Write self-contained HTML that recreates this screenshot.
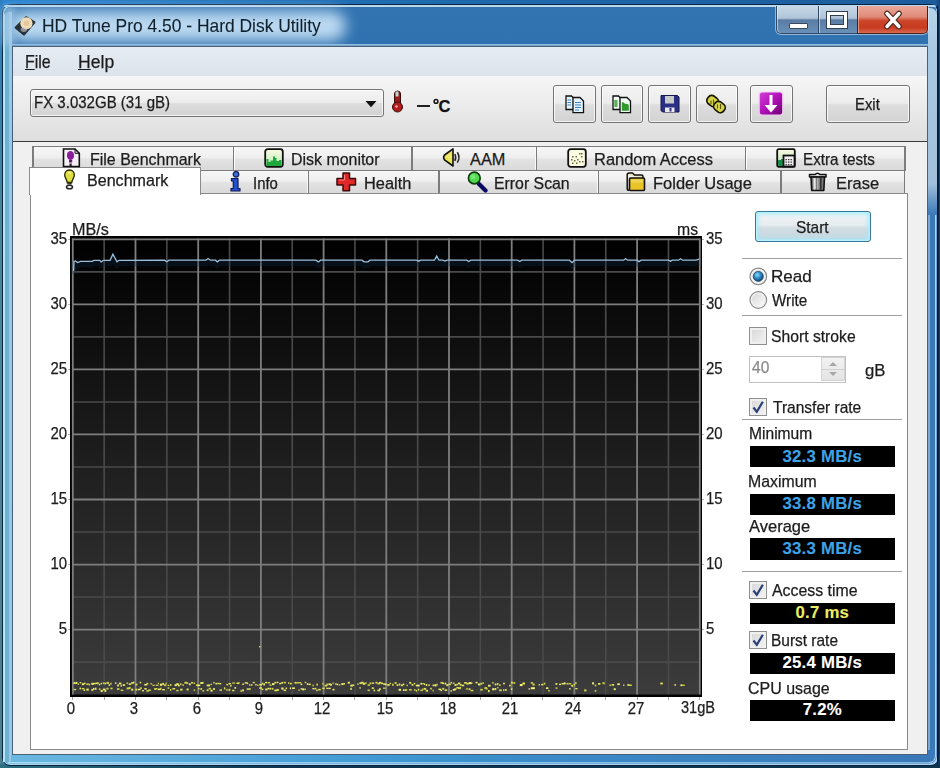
<!DOCTYPE html>
<html><head><meta charset="utf-8"><title>HD Tune Pro</title>
<style>
*{margin:0;padding:0;box-sizing:border-box}
html,body{width:940px;height:768px;overflow:hidden}
body{position:relative;background:linear-gradient(90deg,#2f7fc0 0%,#2a6db0 60%,#1d4f86 100%);font-family:"Liberation Sans",sans-serif;color:#1c1c1c}
.a{position:absolute}
.t{position:absolute;white-space:nowrap;line-height:1;-webkit-text-stroke:0.25px currentColor}
</style></head><body>

<div class="a" style="left:0px;top:0px;width:940px;height:5px;background:linear-gradient(90deg,#2a84d0,#1f6cb0 40%,#1c5c9c 100%)"></div>
<div class="a" style="left:0px;top:0px;width:3px;height:768px;background:linear-gradient(180deg,#2a7ec0 0%,#4a8595 30%,#4a8090 100%)"></div>
<div class="a" style="left:937px;top:0px;width:3px;height:768px;background:linear-gradient(180deg,#1a4a80,#0f3a66)"></div>
<div class="a" style="left:0px;top:764px;width:940px;height:4px;background:linear-gradient(90deg,#2a7080,#0e3550 30%,#0e3550 100%)"></div>
<div class="a" style="left:2px;top:3.5px;width:937px;height:762.5px;border:1.3px solid #0a2440;border-radius:9px 9px 8px 8px;background:linear-gradient(90deg,#72b4d8 0%,#5aa0d0 25%,#3f88c8 50%,#3a7cbc 80%,#3a78b8 100%);box-shadow:inset 1.5px 1.5px 0 #b8e6fa,inset -1.5px -1.5px 0 #a8d4f0"></div>
<div class="a" style="left:4px;top:6px;width:932px;height:39px;border-radius:8px 8px 0 0;background:linear-gradient(180deg,#3a6ea0 0px,#3274b2 3px,#3072b0 100%)"></div>
<div class="a" style="left:4px;top:5px;width:932px;height:1.5px;background:#b8d8f0;border-radius:8px 8px 0 0"></div>
<div class="a" style="left:3.2px;top:12px;width:8.600000000000001px;height:750px;border-radius:6px 0 0 0;background:linear-gradient(90deg,#b0e8f8 0px,#b0e8f8 2px,#70b0d0 2px,#70b0d0 6.3px,#98c8e8 6.3px,#98c8e8 8.6px)"></div>
<div class="a" style="left:8px;top:11px;width:338px;height:30px;border-radius:15px;background:rgba(200,226,246,.92);filter:blur(7px)"></div>
<div class="a" style="left:3px;top:6px;width:12px;height:40px;background:rgba(160,200,230,.7);filter:blur(3px)"></div>
<div class="a" style="left:11.5px;top:44px;width:916.5px;height:2px;background:linear-gradient(180deg,#a0c8e8,#6a9ac0)"></div>
<div class="a" style="left:928px;top:8px;width:8.5px;height:207px;border-radius:0 7px 0 0;background:linear-gradient(180deg,#b8d4ea,#a8c8e4 20%,#a0c0dc 85%,#3a78b8 100%)"></div>
<div class="a" style="left:928px;top:215px;width:8px;height:542px;background:linear-gradient(90deg,#80a8d0 0px,#80a8d0 2px,#3a78b8 2px,#3a78b8 6.8px,#b0d4f0 6.8px,#b0d4f0 8px)"></div>
<div class="a" style="left:926px;top:750px;width:10.299999999999955px;height:13px;border-right:1.3px solid #b0d4f0;border-bottom:1.3px solid #a8d8f8;border-radius:0 0 7px 0;background:#3a7abc"></div>
<div class="a" style="left:936.5px;top:6px;width:1.5px;height:758px;background:#081830"></div>
<div class="a" style="left:11px;top:755px;width:919px;height:7px;background:linear-gradient(90deg,#6ab8e0 0%,#4aa0d8 30%,#3a90cc 50%,#3a82c0 75%,#3a78b8 100%)"></div>
<div class="a" style="left:8px;top:761.5px;width:921px;height:1.5px;background:linear-gradient(90deg,#a8e0f8,#90c8ec 50%,#80b8e0)"></div>
<div class="a" style="left:11.8px;top:45.5px;width:916.0px;height:709.5px;border:1.2px solid #4a6078;background:#f0f0f0"></div>
<div class="a" style="left:13px;top:47px;width:914px;height:29px;background:linear-gradient(180deg,#e6ecf4,#dde3ea)"></div>
<div class="t" style="left:24.90px;top:52.7px;font-size:18.4px;font-weight:400;color:#1c1c1c;transform:scaleX(0.8690);transform-origin:0 50%;"><u>F</u>ile</div>
<div class="t" style="left:78.30px;top:52.7px;font-size:18.4px;font-weight:400;color:#1c1c1c;transform:scaleX(0.9568);transform-origin:0 50%;"><u>H</u>elp</div>
<div class="a" style="left:13px;top:76px;width:914px;height:65px;background:linear-gradient(180deg,#f6f6f6,#dedede)"></div>
<div class="a" style="left:13px;top:141px;width:914px;height:1px;background:#3a3a3a"></div>
<div class="a" style="left:13px;top:142px;width:914px;height:612px;background:#f0f0f0"></div>
<div class="t" style="left:41.82px;top:17.9px;font-size:17.8px;font-weight:400;color:#10202c;transform:scaleX(0.9796);transform-origin:0 50%;-webkit-text-stroke:0.1px currentColor">HD Tune Pro 4.50 - Hard Disk Utility</div>
<div class="a" style="left:775px;top:5.5px;width:154px;height:29.5px;border-radius:0 0 6px 6px;background:rgba(220,240,255,.55)"></div>
<div class="a" style="left:776px;top:6px;width:42px;height:28px;border:1px solid #2e4a66;border-right:none;border-top:none;border-radius:0 0 0 5px;background:linear-gradient(180deg,#c8d8e8 0%,#b0c4d8 45%,#5a7ca4 52%,#6a90b8 100%);box-shadow:inset 1px 0 0 rgba(255,255,255,.5)"></div>
<div class="a" style="left:818px;top:6px;width:39px;height:28px;border:1px solid #2e4a66;border-right:none;border-top:none;background:linear-gradient(180deg,#c8d8e8 0%,#b0c4d8 45%,#5a7ca4 52%,#6a90b8 100%);box-shadow:inset 1px 0 0 rgba(255,255,255,.5)"></div>
<div class="a" style="left:857px;top:6px;width:71px;height:28px;border:1px solid #4a2018;border-top:none;border-radius:0 0 5px 0;background:linear-gradient(180deg,#eaa898 0%,#e08a78 40%,#cc4428 55%,#c83c20 80%,#d86a50 100%);box-shadow:inset 1px 0 0 rgba(255,220,200,.5)"></div>
<div class="a" style="left:788.5px;top:22.5px;width:19.0px;height:6.0px;background:#fff;border:1px solid #3a4a5a;border-radius:1px"></div>
<div class="a" style="left:826.5px;top:11.5px;width:20.0px;height:16.5px;border:3px solid #fff;outline:1px solid #304050;box-shadow:inset 0 0 0 1px #304050"></div>
<svg class="a" style="left:882px;top:9px" width="22" height="22" viewBox="0 0 22 22"><path d="M5 4.5 L17 17.5 M17 4.5 L5 17.5" stroke="#4a2018" stroke-width="5.6" stroke-linecap="round"/><path d="M5 4.5 L17 17.5 M17 4.5 L5 17.5" stroke="#fff" stroke-width="3.4" stroke-linecap="round"/></svg>
<div class="a" style="left:30px;top:89px;width:354px;height:28px;border:1.4px solid #747474;border-radius:3px;background:linear-gradient(180deg,#f4f4f4 0%,#ececec 48%,#dedede 52%,#d2d2d2 100%);box-shadow:inset 0 0 0 1px rgba(255,255,255,.75)"></div>
<div class="t" style="left:34.09px;top:94.6px;font-size:16.6px;font-weight:400;color:#1c1c1c;transform:scaleX(0.9054);transform-origin:0 50%;">FX 3.032GB (31 gB)</div>
<svg class="a" style="left:364px;top:100px" width="14" height="8"><path d="M1.5 1 L12.5 1 L7 7.2 Z" fill="#111"/></svg>
<svg class="a" style="left:391px;top:90px" width="13" height="23" viewBox="0 0 13 23">
<rect x="3.5" y="1" width="6" height="15" rx="3" fill="#9a1a1a" stroke="#3a0808" stroke-width="1"/>
<rect x="4.5" y="1.5" width="3" height="5" fill="#bcd6d4"/>
<circle cx="6.5" cy="17" r="5" fill="#b01c1c" stroke="#3a0808" stroke-width="1"/>
<circle cx="5.5" cy="16.5" r="1.3" fill="#f0a0a0"/>
</svg>
<div class="a" style="left:416.5px;top:105.2px;width:13.0px;height:1.7999999999999972px;background:#202020"></div>
<div class="t" style="left:438.5px;top:97.8px;font-size:16.5px;font-weight:700;color:#111;">C</div>
<svg class="a" style="left:432px;top:98px" width="8" height="7"><circle cx="4" cy="3.4" r="1.9" fill="none" stroke="#151515" stroke-width="1.5"/></svg>
<div class="a" style="left:553px;top:85px;width:43px;height:38px;border:1.4px solid #747474;border-radius:3px;background:linear-gradient(180deg,#f4f4f4 0%,#ececec 48%,#dedede 52%,#d2d2d2 100%);box-shadow:inset 0 0 0 1px rgba(255,255,255,.75)"></div>
<div class="a" style="left:601px;top:85px;width:42px;height:38px;border:1.4px solid #747474;border-radius:3px;background:linear-gradient(180deg,#f4f4f4 0%,#ececec 48%,#dedede 52%,#d2d2d2 100%);box-shadow:inset 0 0 0 1px rgba(255,255,255,.75)"></div>
<div class="a" style="left:648px;top:85px;width:43px;height:38px;border:1.4px solid #747474;border-radius:3px;background:linear-gradient(180deg,#f4f4f4 0%,#ececec 48%,#dedede 52%,#d2d2d2 100%);box-shadow:inset 0 0 0 1px rgba(255,255,255,.75)"></div>
<div class="a" style="left:696px;top:85px;width:42px;height:38px;border:1.4px solid #747474;border-radius:3px;background:linear-gradient(180deg,#f4f4f4 0%,#ececec 48%,#dedede 52%,#d2d2d2 100%);box-shadow:inset 0 0 0 1px rgba(255,255,255,.75)"></div>
<div class="a" style="left:750px;top:85px;width:43px;height:38px;border:1.4px solid #747474;border-radius:3px;background:linear-gradient(180deg,#f4f4f4 0%,#ececec 48%,#dedede 52%,#d2d2d2 100%);box-shadow:inset 0 0 0 1px rgba(255,255,255,.75)"></div>
<div class="a" style="left:826px;top:85px;width:84px;height:38px;border:1.4px solid #747474;border-radius:3px;background:linear-gradient(180deg,#f4f4f4 0%,#ececec 48%,#dedede 52%,#d2d2d2 100%);box-shadow:inset 0 0 0 1px rgba(255,255,255,.75)"></div>
<div class="t" style="left:854.84px;top:95.6px;font-size:17.2px;font-weight:400;color:#1a1a1a;transform:scaleX(0.8643);transform-origin:0 50%;">Exit</div>
<div class="a" style="left:33px;top:146px;width:200.5px;height:25px;background:linear-gradient(180deg,#f7f7f7 0%,#efefef 45%,#e2e2e2 55%,#d9d9d9 100%);box-shadow:inset 1px 1px 0 #fff,inset -1px 0 0 #fafafa"></div>
<div class="a" style="left:233.5px;top:146px;width:178.5px;height:25px;background:linear-gradient(180deg,#f7f7f7 0%,#efefef 45%,#e2e2e2 55%,#d9d9d9 100%);box-shadow:inset 1px 1px 0 #fff,inset -1px 0 0 #fafafa"></div>
<div class="a" style="left:412px;top:146px;width:124.20000000000005px;height:25px;background:linear-gradient(180deg,#f7f7f7 0%,#efefef 45%,#e2e2e2 55%,#d9d9d9 100%);box-shadow:inset 1px 1px 0 #fff,inset -1px 0 0 #fafafa"></div>
<div class="a" style="left:536.2px;top:146px;width:209.5px;height:25px;background:linear-gradient(180deg,#f7f7f7 0%,#efefef 45%,#e2e2e2 55%,#d9d9d9 100%);box-shadow:inset 1px 1px 0 #fff,inset -1px 0 0 #fafafa"></div>
<div class="a" style="left:745.7px;top:146px;width:159.29999999999995px;height:25px;background:linear-gradient(180deg,#f7f7f7 0%,#efefef 45%,#e2e2e2 55%,#d9d9d9 100%);box-shadow:inset 1px 1px 0 #fff,inset -1px 0 0 #fafafa"></div>
<div class="a" style="left:33px;top:145.8px;width:872px;height:1.1999999999999886px;background:#7c7c7c"></div>
<div class="a" style="left:32.4px;top:146px;width:1.3999999999999986px;height:25px;background:#7c7c7c"></div>
<div class="a" style="left:232.9px;top:146px;width:1.4000000000000057px;height:25px;background:#7c7c7c"></div>
<div class="a" style="left:411.4px;top:146px;width:1.400000000000034px;height:25px;background:#7c7c7c"></div>
<div class="a" style="left:535.6px;top:146px;width:1.3999999999999773px;height:25px;background:#7c7c7c"></div>
<div class="a" style="left:745.1px;top:146px;width:1.3999999999999773px;height:25px;background:#7c7c7c"></div>
<div class="a" style="left:904.4px;top:146px;width:1.3999999999999773px;height:25px;background:#7c7c7c"></div>
<div class="a" style="left:200px;top:170px;width:108.30000000000001px;height:24px;background:linear-gradient(180deg,#f7f7f7 0%,#efefef 45%,#e2e2e2 55%,#d9d9d9 100%);box-shadow:inset 1px 1px 0 #fff,inset -1px 0 0 #fafafa"></div>
<div class="a" style="left:308.3px;top:170px;width:130.5px;height:24px;background:linear-gradient(180deg,#f7f7f7 0%,#efefef 45%,#e2e2e2 55%,#d9d9d9 100%);box-shadow:inset 1px 1px 0 #fff,inset -1px 0 0 #fafafa"></div>
<div class="a" style="left:438.8px;top:170px;width:159.59999999999997px;height:24px;background:linear-gradient(180deg,#f7f7f7 0%,#efefef 45%,#e2e2e2 55%,#d9d9d9 100%);box-shadow:inset 1px 1px 0 #fff,inset -1px 0 0 #fafafa"></div>
<div class="a" style="left:598.4px;top:170px;width:182.60000000000002px;height:24px;background:linear-gradient(180deg,#f7f7f7 0%,#efefef 45%,#e2e2e2 55%,#d9d9d9 100%);box-shadow:inset 1px 1px 0 #fff,inset -1px 0 0 #fafafa"></div>
<div class="a" style="left:781px;top:170px;width:123.5px;height:24px;background:linear-gradient(180deg,#f7f7f7 0%,#efefef 45%,#e2e2e2 55%,#d9d9d9 100%);box-shadow:inset 1px 1px 0 #fff,inset -1px 0 0 #fafafa"></div>
<div class="a" style="left:200px;top:169.6px;width:704.5px;height:1.200000000000017px;background:#7c7c7c"></div>
<div class="a" style="left:199.4px;top:170px;width:1.4000000000000057px;height:24px;background:#7c7c7c"></div>
<div class="a" style="left:307.7px;top:170px;width:1.400000000000034px;height:24px;background:#7c7c7c"></div>
<div class="a" style="left:438.2px;top:170px;width:1.400000000000034px;height:24px;background:#7c7c7c"></div>
<div class="a" style="left:597.8px;top:170px;width:1.3999999999999773px;height:24px;background:#7c7c7c"></div>
<div class="a" style="left:780.4px;top:170px;width:1.3999999999999773px;height:24px;background:#7c7c7c"></div>
<div class="a" style="left:903.9px;top:170px;width:1.3999999999999773px;height:24px;background:#7c7c7c"></div>
<div class="a" style="left:30px;top:193.2px;width:878px;height:556.8px;border:1.3px solid #8a8a8a;background:#fff"></div>
<div class="a" style="left:29.4px;top:167.4px;width:171.6px;height:27.599999999999994px;border:1.3px solid #8a8a8a;border-bottom:none;background:#fff"></div>
<div class="t" style="left:89.72px;top:151.2px;font-size:16.3px;font-weight:400;color:#1c1c1c;transform:scaleX(0.9804);transform-origin:0 50%;">File Benchmark</div>
<div class="t" style="left:291.42px;top:151.2px;font-size:16.3px;font-weight:400;color:#1c1c1c;transform:scaleX(0.9787);transform-origin:0 50%;">Disk monitor</div>
<div class="t" style="left:470.10px;top:151.2px;font-size:16.3px;font-weight:400;color:#1c1c1c;transform:scaleX(1.0000);transform-origin:0 50%;">AAM</div>
<div class="t" style="left:594.39px;top:151.2px;font-size:16.3px;font-weight:400;color:#1c1c1c;transform:scaleX(1.0103);transform-origin:0 50%;">Random Access</div>
<div class="t" style="left:803.07px;top:151.2px;font-size:16.3px;font-weight:400;color:#1c1c1c;transform:scaleX(0.9342);transform-origin:0 50%;">Extra tests</div>
<div class="t" style="left:87.21px;top:172.2px;font-size:16.3px;font-weight:400;color:#1c1c1c;transform:scaleX(0.9877);transform-origin:0 50%;">Benchmark</div>
<div class="t" style="left:253.28px;top:174.8px;font-size:16.3px;font-weight:400;color:#1c1c1c;transform:scaleX(0.9154);transform-origin:0 50%;">Info</div>
<div class="t" style="left:363.80px;top:174.8px;font-size:16.3px;font-weight:400;color:#1c1c1c;transform:scaleX(1.0044);transform-origin:0 50%;">Health</div>
<div class="t" style="left:494.03px;top:174.8px;font-size:16.3px;font-weight:400;color:#1c1c1c;transform:scaleX(0.9724);transform-origin:0 50%;">Error Scan</div>
<div class="t" style="left:653.19px;top:174.8px;font-size:16.3px;font-weight:400;color:#1c1c1c;transform:scaleX(1.0115);transform-origin:0 50%;">Folder Usage</div>
<div class="t" style="left:836.09px;top:174.8px;font-size:16.3px;font-weight:400;color:#1c1c1c;transform:scaleX(1.0122);transform-origin:0 50%;">Erase</div>
<svg class="a" style="left:70px;top:236px" width="632" height="461" viewBox="0 0 632 461">
<defs><linearGradient id="cg" x1="0" y1="0" x2="0" y2="1"><stop offset="0" stop-color="#000"/><stop offset="0.22" stop-color="#0e0e0e"/><stop offset="1" stop-color="#3c3c3c"/></linearGradient></defs>
<rect x="0" y="0" width="632" height="461" fill="#000"/>
<rect x="2" y="2.5" width="628" height="456.0" fill="url(#cg)"/>
<line x1="34.15" y1="2.5" x2="34.15" y2="458.5" stroke="#4a4a4a" stroke-width="1.6"/>
<line x1="96.85" y1="2.5" x2="96.85" y2="458.5" stroke="#4a4a4a" stroke-width="1.6"/>
<line x1="159.55" y1="2.5" x2="159.55" y2="458.5" stroke="#4a4a4a" stroke-width="1.6"/>
<line x1="222.25" y1="2.5" x2="222.25" y2="458.5" stroke="#4a4a4a" stroke-width="1.6"/>
<line x1="284.95" y1="2.5" x2="284.95" y2="458.5" stroke="#4a4a4a" stroke-width="1.6"/>
<line x1="347.65" y1="2.5" x2="347.65" y2="458.5" stroke="#4a4a4a" stroke-width="1.6"/>
<line x1="410.35" y1="2.5" x2="410.35" y2="458.5" stroke="#4a4a4a" stroke-width="1.6"/>
<line x1="473.05" y1="2.5" x2="473.05" y2="458.5" stroke="#4a4a4a" stroke-width="1.6"/>
<line x1="535.75" y1="2.5" x2="535.75" y2="458.5" stroke="#4a4a4a" stroke-width="1.6"/>
<line x1="598.45" y1="2.5" x2="598.45" y2="458.5" stroke="#4a4a4a" stroke-width="1.6"/>
<line x1="2" y1="35.83" x2="630" y2="35.83" stroke="#4a4a4a" stroke-width="1.6"/>
<line x1="2" y1="100.88" x2="630" y2="100.88" stroke="#4a4a4a" stroke-width="1.6"/>
<line x1="2" y1="165.93" x2="630" y2="165.93" stroke="#4a4a4a" stroke-width="1.6"/>
<line x1="2" y1="230.97" x2="630" y2="230.97" stroke="#4a4a4a" stroke-width="1.6"/>
<line x1="2" y1="296.02" x2="630" y2="296.02" stroke="#4a4a4a" stroke-width="1.6"/>
<line x1="2" y1="361.07" x2="630" y2="361.07" stroke="#4a4a4a" stroke-width="1.6"/>
<line x1="2" y1="426.12" x2="630" y2="426.12" stroke="#4a4a4a" stroke-width="1.6"/>
<line x1="2.80" y1="2.5" x2="2.80" y2="458.5" stroke="#7e7e7e" stroke-width="1.8"/>
<line x1="65.50" y1="2.5" x2="65.50" y2="458.5" stroke="#7e7e7e" stroke-width="1.8"/>
<line x1="128.20" y1="2.5" x2="128.20" y2="458.5" stroke="#7e7e7e" stroke-width="1.8"/>
<line x1="190.90" y1="2.5" x2="190.90" y2="458.5" stroke="#7e7e7e" stroke-width="1.8"/>
<line x1="253.60" y1="2.5" x2="253.60" y2="458.5" stroke="#7e7e7e" stroke-width="1.8"/>
<line x1="316.30" y1="2.5" x2="316.30" y2="458.5" stroke="#7e7e7e" stroke-width="1.8"/>
<line x1="379.00" y1="2.5" x2="379.00" y2="458.5" stroke="#7e7e7e" stroke-width="1.8"/>
<line x1="441.70" y1="2.5" x2="441.70" y2="458.5" stroke="#7e7e7e" stroke-width="1.8"/>
<line x1="504.40" y1="2.5" x2="504.40" y2="458.5" stroke="#7e7e7e" stroke-width="1.8"/>
<line x1="567.10" y1="2.5" x2="567.10" y2="458.5" stroke="#7e7e7e" stroke-width="1.8"/>
<line x1="629.80" y1="2.5" x2="629.80" y2="458.5" stroke="#7e7e7e" stroke-width="1.8"/>
<line x1="2" y1="3.30" x2="630" y2="3.30" stroke="#7e7e7e" stroke-width="1.8"/>
<line x1="2" y1="68.35" x2="630" y2="68.35" stroke="#7e7e7e" stroke-width="1.8"/>
<line x1="2" y1="133.40" x2="630" y2="133.40" stroke="#7e7e7e" stroke-width="1.8"/>
<line x1="2" y1="198.45" x2="630" y2="198.45" stroke="#7e7e7e" stroke-width="1.8"/>
<line x1="2" y1="263.50" x2="630" y2="263.50" stroke="#7e7e7e" stroke-width="1.8"/>
<line x1="2" y1="328.55" x2="630" y2="328.55" stroke="#7e7e7e" stroke-width="1.8"/>
<line x1="2" y1="393.60" x2="630" y2="393.60" stroke="#7e7e7e" stroke-width="1.8"/>
<rect x="3.5" y="446.1" width="2.2" height="2.0" fill="#e8e860"/>
<rect x="3.5" y="452.9" width="2.7" height="1.3" fill="#dcdc50"/>
<rect x="5.5" y="445.9" width="1.9" height="2.1" fill="#e8e860"/>
<rect x="7.7" y="447.5" width="1.3" height="1.3" fill="#dcdc50"/>
<rect x="9.6" y="446.0" width="1.7" height="1.4" fill="#dcdc50"/>
<rect x="9.6" y="451.6" width="1.4" height="1.8" fill="#e8e860"/>
<rect x="11.8" y="447.3" width="2.4" height="1.8" fill="#f0f078"/>
<rect x="11.8" y="452.0" width="2.5" height="1.4" fill="#dcdc50"/>
<rect x="13.7" y="446.7" width="1.9" height="1.4" fill="#e8e860"/>
<rect x="13.7" y="453.4" width="1.4" height="1.6" fill="#f0f078"/>
<rect x="16.3" y="447.4" width="2.5" height="1.6" fill="#d0d048"/>
<rect x="16.3" y="452.6" width="2.5" height="2.0" fill="#e8e860"/>
<rect x="18.8" y="447.7" width="1.3" height="1.8" fill="#d0d048"/>
<rect x="21.3" y="446.8" width="2.3" height="2.1" fill="#e8e860"/>
<rect x="21.3" y="453.0" width="2.0" height="1.9" fill="#dcdc50"/>
<rect x="23.0" y="446.9" width="2.6" height="1.4" fill="#e8e860"/>
<rect x="23.0" y="451.9" width="1.4" height="2.0" fill="#f0f078"/>
<rect x="24.9" y="446.7" width="2.6" height="1.4" fill="#dcdc50"/>
<rect x="24.9" y="451.7" width="1.6" height="2.0" fill="#f0f078"/>
<rect x="26.6" y="446.1" width="2.1" height="2.1" fill="#d0d048"/>
<rect x="28.8" y="447.8" width="1.3" height="1.6" fill="#f0f078"/>
<rect x="28.8" y="452.5" width="1.8" height="1.4" fill="#dcdc50"/>
<rect x="30.6" y="446.7" width="1.3" height="1.8" fill="#e8e860"/>
<rect x="30.6" y="454.0" width="2.2" height="2.0" fill="#e8e860"/>
<rect x="32.8" y="446.4" width="1.8" height="1.7" fill="#d0d048"/>
<rect x="32.8" y="452.6" width="2.8" height="1.7" fill="#f0f078"/>
<rect x="34.5" y="446.7" width="1.6" height="1.7" fill="#dcdc50"/>
<rect x="34.5" y="454.0" width="1.8" height="1.9" fill="#e8e860"/>
<rect x="36.4" y="445.9" width="2.6" height="2.0" fill="#d0d048"/>
<rect x="36.4" y="451.7" width="2.1" height="1.8" fill="#d0d048"/>
<rect x="38.6" y="448.0" width="1.5" height="2.0" fill="#dcdc50"/>
<rect x="40.4" y="446.7" width="1.2" height="1.9" fill="#e8e860"/>
<rect x="40.4" y="451.6" width="2.2" height="1.7" fill="#d0d048"/>
<rect x="44.9" y="446.3" width="1.5" height="1.7" fill="#dcdc50"/>
<rect x="47.1" y="448.5" width="1.8" height="2.0" fill="#e8e860"/>
<rect x="47.1" y="452.2" width="2.3" height="1.7" fill="#dcdc50"/>
<rect x="48.9" y="446.7" width="2.5" height="1.7" fill="#f0f078"/>
<rect x="50.6" y="448.8" width="1.2" height="1.9" fill="#f0f078"/>
<rect x="50.6" y="453.6" width="2.8" height="1.4" fill="#d0d048"/>
<rect x="52.7" y="448.2" width="2.4" height="1.7" fill="#e8e860"/>
<rect x="56.6" y="446.5" width="1.6" height="1.5" fill="#d0d048"/>
<rect x="56.6" y="451.4" width="2.7" height="2.0" fill="#d0d048"/>
<rect x="58.8" y="447.3" width="2.5" height="1.7" fill="#dcdc50"/>
<rect x="58.8" y="451.1" width="1.9" height="1.8" fill="#dcdc50"/>
<rect x="61.2" y="446.1" width="2.2" height="1.7" fill="#e8e860"/>
<rect x="61.2" y="452.7" width="2.1" height="2.0" fill="#e8e860"/>
<rect x="62.9" y="445.7" width="1.4" height="1.7" fill="#f0f078"/>
<rect x="65.4" y="447.6" width="2.0" height="1.9" fill="#dcdc50"/>
<rect x="65.4" y="452.7" width="2.0" height="1.9" fill="#dcdc50"/>
<rect x="67.9" y="452.8" width="2.7" height="1.4" fill="#f0f078"/>
<rect x="69.6" y="445.8" width="1.6" height="1.5" fill="#e8e860"/>
<rect x="69.6" y="451.4" width="2.4" height="1.4" fill="#d0d048"/>
<rect x="72.1" y="454.0" width="1.8" height="1.4" fill="#f0f078"/>
<rect x="74.3" y="447.9" width="2.8" height="1.6" fill="#f0f078"/>
<rect x="74.3" y="452.0" width="2.4" height="1.6" fill="#e8e860"/>
<rect x="76.4" y="446.8" width="2.0" height="1.7" fill="#d0d048"/>
<rect x="76.4" y="454.2" width="2.5" height="1.4" fill="#e8e860"/>
<rect x="78.3" y="453.4" width="2.5" height="1.6" fill="#d0d048"/>
<rect x="80.4" y="447.2" width="1.7" height="1.3" fill="#d0d048"/>
<rect x="82.4" y="448.6" width="2.2" height="1.4" fill="#d0d048"/>
<rect x="84.1" y="452.1" width="2.1" height="1.8" fill="#d0d048"/>
<rect x="85.7" y="448.6" width="2.8" height="1.3" fill="#d0d048"/>
<rect x="85.7" y="452.0" width="1.7" height="1.5" fill="#dcdc50"/>
<rect x="87.8" y="446.7" width="1.2" height="1.3" fill="#d0d048"/>
<rect x="87.8" y="452.6" width="2.8" height="1.5" fill="#f0f078"/>
<rect x="89.9" y="447.7" width="2.3" height="2.1" fill="#f0f078"/>
<rect x="89.9" y="451.7" width="1.6" height="2.0" fill="#dcdc50"/>
<rect x="92.2" y="446.9" width="1.8" height="2.0" fill="#e8e860"/>
<rect x="92.2" y="453.0" width="2.6" height="1.4" fill="#f0f078"/>
<rect x="93.9" y="448.4" width="2.3" height="1.8" fill="#d0d048"/>
<rect x="95.5" y="446.5" width="1.2" height="2.1" fill="#d0d048"/>
<rect x="97.7" y="448.7" width="1.7" height="1.4" fill="#d0d048"/>
<rect x="97.7" y="451.3" width="1.6" height="1.5" fill="#dcdc50"/>
<rect x="100.0" y="448.2" width="1.4" height="1.6" fill="#e8e860"/>
<rect x="100.0" y="453.0" width="1.3" height="1.8" fill="#dcdc50"/>
<rect x="102.4" y="452.0" width="2.8" height="1.5" fill="#dcdc50"/>
<rect x="104.6" y="448.2" width="2.3" height="1.9" fill="#f0f078"/>
<rect x="106.3" y="447.2" width="2.5" height="2.0" fill="#e8e860"/>
<rect x="106.3" y="453.9" width="2.3" height="1.4" fill="#dcdc50"/>
<rect x="108.0" y="448.7" width="1.8" height="1.7" fill="#f0f078"/>
<rect x="110.2" y="447.2" width="1.2" height="1.9" fill="#e8e860"/>
<rect x="110.2" y="452.7" width="2.3" height="1.9" fill="#e8e860"/>
<rect x="112.3" y="448.3" width="1.6" height="1.5" fill="#dcdc50"/>
<rect x="114.3" y="445.8" width="2.7" height="1.9" fill="#d0d048"/>
<rect x="116.6" y="446.1" width="1.6" height="1.8" fill="#d0d048"/>
<rect x="116.6" y="452.5" width="2.0" height="1.9" fill="#e8e860"/>
<rect x="118.8" y="447.3" width="1.9" height="1.9" fill="#f0f078"/>
<rect x="121.0" y="445.9" width="2.0" height="1.7" fill="#d0d048"/>
<rect x="123.6" y="446.5" width="1.5" height="1.4" fill="#dcdc50"/>
<rect x="123.6" y="453.4" width="1.6" height="1.4" fill="#d0d048"/>
<rect x="126.0" y="448.4" width="2.3" height="1.7" fill="#dcdc50"/>
<rect x="128.0" y="448.6" width="2.3" height="1.5" fill="#f0f078"/>
<rect x="128.0" y="452.1" width="1.7" height="1.3" fill="#d0d048"/>
<rect x="130.3" y="446.0" width="2.7" height="2.0" fill="#e8e860"/>
<rect x="130.3" y="452.2" width="1.8" height="1.6" fill="#e8e860"/>
<rect x="132.3" y="445.8" width="1.4" height="1.8" fill="#d0d048"/>
<rect x="132.3" y="454.1" width="1.9" height="1.5" fill="#d0d048"/>
<rect x="136.7" y="448.5" width="2.7" height="1.9" fill="#dcdc50"/>
<rect x="136.7" y="453.3" width="1.9" height="1.8" fill="#dcdc50"/>
<rect x="138.6" y="448.6" width="1.4" height="1.6" fill="#f0f078"/>
<rect x="138.6" y="451.8" width="2.4" height="1.6" fill="#d0d048"/>
<rect x="140.5" y="447.7" width="1.4" height="1.4" fill="#dcdc50"/>
<rect x="140.5" y="453.6" width="2.1" height="2.0" fill="#f0f078"/>
<rect x="143.1" y="446.0" width="1.5" height="1.4" fill="#e8e860"/>
<rect x="143.1" y="452.0" width="1.8" height="2.0" fill="#dcdc50"/>
<rect x="145.4" y="446.9" width="2.0" height="1.5" fill="#f0f078"/>
<rect x="147.5" y="446.8" width="2.3" height="1.4" fill="#dcdc50"/>
<rect x="149.5" y="447.0" width="1.7" height="1.4" fill="#e8e860"/>
<rect x="149.5" y="453.4" width="2.5" height="1.3" fill="#f0f078"/>
<rect x="153.9" y="451.3" width="1.4" height="2.1" fill="#e8e860"/>
<rect x="156.3" y="448.0" width="1.9" height="1.3" fill="#e8e860"/>
<rect x="156.3" y="452.8" width="1.3" height="2.1" fill="#d0d048"/>
<rect x="158.5" y="447.0" width="2.4" height="1.4" fill="#e8e860"/>
<rect x="158.5" y="452.9" width="1.8" height="1.9" fill="#dcdc50"/>
<rect x="160.1" y="448.8" width="1.6" height="1.8" fill="#d0d048"/>
<rect x="162.2" y="446.4" width="2.7" height="1.3" fill="#d0d048"/>
<rect x="162.2" y="453.8" width="2.2" height="1.5" fill="#e8e860"/>
<rect x="164.4" y="451.1" width="1.7" height="1.6" fill="#f0f078"/>
<rect x="166.4" y="446.5" width="2.6" height="1.5" fill="#e8e860"/>
<rect x="168.3" y="446.3" width="1.6" height="1.4" fill="#d0d048"/>
<rect x="170.5" y="453.9" width="1.3" height="2.0" fill="#dcdc50"/>
<rect x="172.2" y="447.5" width="1.9" height="1.4" fill="#e8e860"/>
<rect x="172.2" y="453.3" width="1.7" height="2.1" fill="#e8e860"/>
<rect x="174.7" y="446.2" width="2.7" height="1.3" fill="#f0f078"/>
<rect x="176.7" y="446.7" width="1.5" height="1.4" fill="#e8e860"/>
<rect x="176.7" y="452.3" width="2.6" height="1.6" fill="#dcdc50"/>
<rect x="179.1" y="448.2" width="1.3" height="1.5" fill="#f0f078"/>
<rect x="179.1" y="452.4" width="1.7" height="1.3" fill="#f0f078"/>
<rect x="181.1" y="448.1" width="1.3" height="1.7" fill="#e8e860"/>
<rect x="182.7" y="445.8" width="2.2" height="1.5" fill="#d0d048"/>
<rect x="185.0" y="447.9" width="1.7" height="1.5" fill="#d0d048"/>
<rect x="187.2" y="448.6" width="1.3" height="1.4" fill="#dcdc50"/>
<rect x="189.2" y="448.1" width="2.7" height="1.4" fill="#f0f078"/>
<rect x="189.2" y="451.0" width="2.7" height="2.0" fill="#d0d048"/>
<rect x="191.6" y="446.6" width="1.7" height="1.9" fill="#d0d048"/>
<rect x="191.6" y="452.6" width="1.8" height="1.5" fill="#dcdc50"/>
<rect x="193.3" y="447.4" width="1.7" height="2.0" fill="#f0f078"/>
<rect x="195.1" y="445.9" width="2.0" height="1.4" fill="#f0f078"/>
<rect x="195.1" y="452.5" width="2.6" height="1.9" fill="#dcdc50"/>
<rect x="197.6" y="446.0" width="2.5" height="1.5" fill="#d0d048"/>
<rect x="197.6" y="451.8" width="1.6" height="1.5" fill="#f0f078"/>
<rect x="199.4" y="448.4" width="2.1" height="1.4" fill="#d0d048"/>
<rect x="199.4" y="451.8" width="2.0" height="1.8" fill="#e8e860"/>
<rect x="202.0" y="447.1" width="2.5" height="2.0" fill="#f0f078"/>
<rect x="202.0" y="451.9" width="1.4" height="1.8" fill="#dcdc50"/>
<rect x="204.4" y="445.8" width="2.0" height="1.7" fill="#dcdc50"/>
<rect x="204.4" y="453.5" width="2.7" height="1.8" fill="#e8e860"/>
<rect x="206.7" y="445.7" width="1.7" height="1.5" fill="#e8e860"/>
<rect x="206.7" y="452.9" width="2.2" height="2.0" fill="#dcdc50"/>
<rect x="209.2" y="446.8" width="2.2" height="1.5" fill="#e8e860"/>
<rect x="211.3" y="445.9" width="1.8" height="1.8" fill="#dcdc50"/>
<rect x="211.3" y="451.5" width="2.3" height="2.1" fill="#f0f078"/>
<rect x="213.6" y="445.8" width="2.4" height="1.6" fill="#d0d048"/>
<rect x="213.6" y="453.5" width="2.5" height="1.6" fill="#dcdc50"/>
<rect x="215.6" y="451.5" width="1.4" height="1.6" fill="#e8e860"/>
<rect x="218.1" y="446.1" width="1.2" height="1.8" fill="#dcdc50"/>
<rect x="219.8" y="446.8" width="2.0" height="1.6" fill="#dcdc50"/>
<rect x="219.8" y="451.5" width="1.3" height="1.7" fill="#f0f078"/>
<rect x="222.2" y="451.4" width="2.7" height="1.6" fill="#f0f078"/>
<rect x="224.4" y="445.9" width="2.3" height="1.8" fill="#dcdc50"/>
<rect x="226.6" y="446.2" width="2.0" height="1.3" fill="#dcdc50"/>
<rect x="228.4" y="446.1" width="2.8" height="1.3" fill="#dcdc50"/>
<rect x="228.4" y="453.4" width="1.3" height="1.4" fill="#d0d048"/>
<rect x="230.6" y="447.6" width="1.7" height="1.5" fill="#f0f078"/>
<rect x="230.6" y="452.2" width="1.8" height="1.4" fill="#f0f078"/>
<rect x="232.2" y="452.4" width="2.2" height="2.0" fill="#f0f078"/>
<rect x="234.6" y="445.8" width="1.8" height="1.4" fill="#d0d048"/>
<rect x="234.6" y="452.6" width="1.3" height="1.4" fill="#dcdc50"/>
<rect x="236.9" y="447.2" width="1.3" height="1.8" fill="#f0f078"/>
<rect x="238.5" y="447.6" width="2.3" height="1.5" fill="#e8e860"/>
<rect x="242.4" y="448.6" width="1.3" height="1.8" fill="#d0d048"/>
<rect x="242.4" y="452.0" width="2.2" height="1.4" fill="#f0f078"/>
<rect x="244.5" y="451.8" width="2.0" height="1.6" fill="#d0d048"/>
<rect x="246.3" y="447.6" width="1.6" height="2.0" fill="#d0d048"/>
<rect x="246.3" y="453.5" width="1.4" height="1.8" fill="#e8e860"/>
<rect x="248.2" y="452.9" width="2.6" height="1.5" fill="#e8e860"/>
<rect x="252.3" y="446.8" width="1.4" height="1.9" fill="#d0d048"/>
<rect x="252.3" y="451.6" width="2.4" height="1.5" fill="#e8e860"/>
<rect x="254.5" y="448.7" width="2.6" height="1.9" fill="#d0d048"/>
<rect x="256.3" y="447.6" width="1.9" height="2.0" fill="#d0d048"/>
<rect x="256.3" y="451.7" width="2.2" height="1.3" fill="#e8e860"/>
<rect x="258.5" y="447.3" width="2.1" height="1.8" fill="#f0f078"/>
<rect x="258.5" y="451.7" width="2.2" height="1.4" fill="#f0f078"/>
<rect x="260.1" y="447.9" width="1.9" height="1.8" fill="#e8e860"/>
<rect x="262.5" y="446.4" width="1.2" height="1.8" fill="#d0d048"/>
<rect x="262.5" y="452.9" width="2.0" height="1.5" fill="#f0f078"/>
<rect x="265.0" y="447.3" width="1.8" height="1.4" fill="#dcdc50"/>
<rect x="266.7" y="447.7" width="1.5" height="1.5" fill="#f0f078"/>
<rect x="268.8" y="448.2" width="1.5" height="1.4" fill="#d0d048"/>
<rect x="271.4" y="447.1" width="2.1" height="2.0" fill="#f0f078"/>
<rect x="273.4" y="447.0" width="1.6" height="1.5" fill="#e8e860"/>
<rect x="277.7" y="445.8" width="2.2" height="1.8" fill="#f0f078"/>
<rect x="280.3" y="448.6" width="2.6" height="2.0" fill="#e8e860"/>
<rect x="280.3" y="451.8" width="1.6" height="2.1" fill="#dcdc50"/>
<rect x="282.6" y="448.4" width="1.7" height="1.6" fill="#dcdc50"/>
<rect x="287.3" y="447.3" width="1.2" height="1.6" fill="#e8e860"/>
<rect x="289.4" y="446.3" width="2.2" height="1.8" fill="#e8e860"/>
<rect x="289.4" y="451.1" width="1.4" height="1.6" fill="#dcdc50"/>
<rect x="291.2" y="445.7" width="2.3" height="1.9" fill="#e8e860"/>
<rect x="292.8" y="446.8" width="2.5" height="2.0" fill="#e8e860"/>
<rect x="295.2" y="446.4" width="1.5" height="1.3" fill="#e8e860"/>
<rect x="297.6" y="448.2" width="2.2" height="1.7" fill="#d0d048"/>
<rect x="297.6" y="453.5" width="2.2" height="1.6" fill="#d0d048"/>
<rect x="299.6" y="446.4" width="1.7" height="2.0" fill="#d0d048"/>
<rect x="301.8" y="446.5" width="2.4" height="1.3" fill="#f0f078"/>
<rect x="301.8" y="451.3" width="2.0" height="1.7" fill="#e8e860"/>
<rect x="303.6" y="453.6" width="1.5" height="1.7" fill="#e8e860"/>
<rect x="305.5" y="445.8" width="1.8" height="1.7" fill="#e8e860"/>
<rect x="307.3" y="446.7" width="2.5" height="1.8" fill="#d0d048"/>
<rect x="307.3" y="453.6" width="2.7" height="1.7" fill="#dcdc50"/>
<rect x="309.0" y="445.9" width="2.5" height="1.8" fill="#e8e860"/>
<rect x="309.0" y="452.3" width="1.8" height="1.6" fill="#e8e860"/>
<rect x="311.2" y="446.6" width="1.9" height="1.6" fill="#dcdc50"/>
<rect x="313.1" y="447.3" width="2.4" height="1.6" fill="#e8e860"/>
<rect x="313.1" y="451.5" width="2.5" height="1.4" fill="#d0d048"/>
<rect x="315.1" y="447.5" width="1.4" height="1.8" fill="#f0f078"/>
<rect x="317.2" y="448.0" width="2.5" height="1.9" fill="#dcdc50"/>
<rect x="319.5" y="446.7" width="1.6" height="1.5" fill="#dcdc50"/>
<rect x="322.1" y="447.7" width="1.5" height="2.1" fill="#dcdc50"/>
<rect x="324.5" y="446.2" width="2.2" height="1.5" fill="#e8e860"/>
<rect x="326.5" y="448.3" width="1.9" height="1.7" fill="#dcdc50"/>
<rect x="328.6" y="447.5" width="1.8" height="2.0" fill="#dcdc50"/>
<rect x="328.6" y="452.8" width="2.4" height="2.0" fill="#f0f078"/>
<rect x="330.9" y="448.4" width="2.2" height="1.8" fill="#dcdc50"/>
<rect x="332.9" y="447.6" width="1.4" height="1.5" fill="#f0f078"/>
<rect x="332.9" y="453.3" width="1.5" height="1.7" fill="#f0f078"/>
<rect x="334.5" y="453.1" width="2.6" height="1.9" fill="#d0d048"/>
<rect x="336.5" y="448.7" width="1.3" height="1.4" fill="#dcdc50"/>
<rect x="339.1" y="445.9" width="2.1" height="1.9" fill="#dcdc50"/>
<rect x="339.1" y="453.0" width="2.5" height="1.6" fill="#d0d048"/>
<rect x="341.6" y="447.8" width="1.8" height="1.9" fill="#e8e860"/>
<rect x="343.9" y="446.8" width="1.3" height="1.6" fill="#e8e860"/>
<rect x="343.9" y="453.2" width="1.8" height="1.4" fill="#d0d048"/>
<rect x="345.8" y="448.7" width="2.8" height="1.7" fill="#f0f078"/>
<rect x="345.8" y="454.0" width="1.3" height="1.7" fill="#dcdc50"/>
<rect x="347.9" y="448.7" width="1.8" height="1.7" fill="#f0f078"/>
<rect x="347.9" y="452.8" width="1.4" height="1.6" fill="#f0f078"/>
<rect x="350.4" y="446.8" width="1.6" height="1.8" fill="#f0f078"/>
<rect x="350.4" y="453.6" width="2.5" height="1.5" fill="#d0d048"/>
<rect x="352.3" y="447.0" width="2.2" height="1.4" fill="#d0d048"/>
<rect x="352.3" y="452.2" width="1.3" height="1.9" fill="#d0d048"/>
<rect x="354.0" y="447.6" width="1.2" height="1.5" fill="#e8e860"/>
<rect x="354.0" y="451.9" width="2.2" height="2.0" fill="#dcdc50"/>
<rect x="355.8" y="448.1" width="1.5" height="1.9" fill="#f0f078"/>
<rect x="355.8" y="453.9" width="2.2" height="1.8" fill="#e8e860"/>
<rect x="358.3" y="448.3" width="1.5" height="1.7" fill="#dcdc50"/>
<rect x="360.3" y="451.8" width="1.6" height="1.7" fill="#dcdc50"/>
<rect x="362.5" y="448.5" width="2.3" height="1.7" fill="#dcdc50"/>
<rect x="362.5" y="453.8" width="1.2" height="1.7" fill="#d0d048"/>
<rect x="364.7" y="448.3" width="1.8" height="2.1" fill="#f0f078"/>
<rect x="366.4" y="447.7" width="1.2" height="1.8" fill="#e8e860"/>
<rect x="368.4" y="452.6" width="2.6" height="1.5" fill="#e8e860"/>
<rect x="370.4" y="445.9" width="2.3" height="1.7" fill="#d0d048"/>
<rect x="370.4" y="453.5" width="1.5" height="1.6" fill="#f0f078"/>
<rect x="372.2" y="446.5" width="1.8" height="1.6" fill="#f0f078"/>
<rect x="372.2" y="451.9" width="2.0" height="1.8" fill="#dcdc50"/>
<rect x="374.6" y="446.6" width="1.7" height="1.9" fill="#e8e860"/>
<rect x="374.6" y="453.3" width="2.6" height="1.6" fill="#e8e860"/>
<rect x="376.3" y="448.2" width="2.0" height="1.9" fill="#e8e860"/>
<rect x="378.5" y="447.6" width="2.3" height="1.5" fill="#e8e860"/>
<rect x="380.6" y="445.9" width="1.5" height="1.6" fill="#e8e860"/>
<rect x="380.6" y="454.0" width="1.2" height="1.9" fill="#dcdc50"/>
<rect x="382.8" y="446.6" width="1.9" height="1.3" fill="#d0d048"/>
<rect x="382.8" y="452.9" width="2.7" height="1.8" fill="#f0f078"/>
<rect x="384.4" y="448.2" width="2.1" height="1.7" fill="#f0f078"/>
<rect x="384.4" y="452.2" width="2.1" height="1.7" fill="#dcdc50"/>
<rect x="386.4" y="447.7" width="1.5" height="1.8" fill="#dcdc50"/>
<rect x="386.4" y="451.0" width="2.3" height="1.5" fill="#e8e860"/>
<rect x="388.1" y="446.5" width="2.1" height="1.9" fill="#f0f078"/>
<rect x="388.1" y="451.2" width="2.4" height="1.9" fill="#dcdc50"/>
<rect x="389.8" y="447.9" width="1.9" height="2.0" fill="#d0d048"/>
<rect x="389.8" y="451.1" width="1.3" height="1.6" fill="#e8e860"/>
<rect x="391.7" y="448.7" width="2.5" height="1.6" fill="#e8e860"/>
<rect x="394.1" y="446.1" width="2.7" height="1.6" fill="#e8e860"/>
<rect x="396.3" y="446.8" width="2.5" height="1.9" fill="#d0d048"/>
<rect x="396.3" y="451.9" width="1.3" height="2.0" fill="#d0d048"/>
<rect x="398.6" y="446.1" width="2.5" height="2.1" fill="#f0f078"/>
<rect x="398.6" y="452.2" width="1.8" height="1.9" fill="#dcdc50"/>
<rect x="400.5" y="446.4" width="1.9" height="1.5" fill="#e8e860"/>
<rect x="400.5" y="453.8" width="2.8" height="1.5" fill="#dcdc50"/>
<rect x="405.5" y="445.9" width="2.1" height="1.5" fill="#f0f078"/>
<rect x="408.0" y="447.5" width="2.3" height="1.9" fill="#f0f078"/>
<rect x="410.2" y="446.8" width="2.1" height="1.9" fill="#d0d048"/>
<rect x="410.2" y="452.9" width="2.6" height="1.7" fill="#d0d048"/>
<rect x="412.4" y="446.2" width="1.5" height="1.6" fill="#d0d048"/>
<rect x="414.4" y="451.1" width="2.8" height="2.0" fill="#d0d048"/>
<rect x="416.3" y="452.0" width="1.2" height="1.7" fill="#d0d048"/>
<rect x="418.0" y="448.8" width="2.6" height="1.8" fill="#f0f078"/>
<rect x="418.0" y="454.0" width="1.6" height="2.1" fill="#e8e860"/>
<rect x="422.2" y="446.2" width="1.5" height="1.3" fill="#e8e860"/>
<rect x="422.2" y="452.2" width="2.3" height="2.1" fill="#f0f078"/>
<rect x="424.7" y="447.5" width="1.8" height="1.9" fill="#e8e860"/>
<rect x="424.7" y="452.0" width="1.6" height="2.1" fill="#e8e860"/>
<rect x="427.0" y="447.0" width="1.5" height="2.1" fill="#dcdc50"/>
<rect x="427.0" y="451.1" width="1.6" height="1.3" fill="#d0d048"/>
<rect x="429.1" y="448.5" width="1.6" height="1.3" fill="#f0f078"/>
<rect x="429.1" y="453.4" width="2.7" height="1.8" fill="#d0d048"/>
<rect x="433.1" y="446.8" width="1.8" height="1.5" fill="#f0f078"/>
<rect x="433.1" y="453.2" width="1.2" height="1.9" fill="#dcdc50"/>
<rect x="434.9" y="453.0" width="1.8" height="1.9" fill="#dcdc50"/>
<rect x="439.1" y="448.7" width="1.7" height="1.7" fill="#dcdc50"/>
<rect x="440.8" y="445.8" width="2.3" height="1.7" fill="#dcdc50"/>
<rect x="440.8" y="452.3" width="1.6" height="1.5" fill="#e8e860"/>
<rect x="443.3" y="446.1" width="2.0" height="1.7" fill="#d0d048"/>
<rect x="449.8" y="448.0" width="2.8" height="2.1" fill="#f0f078"/>
<rect x="452.4" y="446.5" width="2.6" height="2.0" fill="#e8e860"/>
<rect x="458.6" y="452.2" width="1.3" height="1.5" fill="#f0f078"/>
<rect x="460.8" y="446.2" width="2.4" height="1.5" fill="#dcdc50"/>
<rect x="460.8" y="451.3" width="2.2" height="1.9" fill="#f0f078"/>
<rect x="462.5" y="447.7" width="2.2" height="1.8" fill="#dcdc50"/>
<rect x="462.5" y="451.2" width="2.4" height="2.0" fill="#f0f078"/>
<rect x="468.6" y="448.0" width="1.4" height="1.5" fill="#d0d048"/>
<rect x="471.2" y="447.8" width="2.1" height="1.6" fill="#e8e860"/>
<rect x="473.8" y="446.7" width="1.6" height="1.9" fill="#d0d048"/>
<rect x="476.0" y="451.3" width="2.4" height="1.7" fill="#f0f078"/>
<rect x="478.1" y="454.1" width="1.6" height="1.4" fill="#dcdc50"/>
<rect x="485.5" y="447.0" width="1.8" height="1.9" fill="#e8e860"/>
<rect x="485.5" y="451.4" width="2.0" height="1.4" fill="#d0d048"/>
<rect x="489.1" y="447.7" width="1.9" height="1.4" fill="#f0f078"/>
<rect x="491.6" y="446.9" width="2.5" height="1.6" fill="#e8e860"/>
<rect x="494.0" y="446.4" width="1.7" height="2.0" fill="#f0f078"/>
<rect x="496.6" y="446.9" width="2.1" height="1.7" fill="#d0d048"/>
<rect x="499.1" y="447.0" width="2.2" height="1.4" fill="#d0d048"/>
<rect x="499.1" y="452.0" width="1.5" height="1.5" fill="#e8e860"/>
<rect x="501.2" y="448.8" width="1.9" height="1.9" fill="#e8e860"/>
<rect x="503.6" y="447.7" width="1.6" height="1.8" fill="#d0d048"/>
<rect x="505.3" y="446.0" width="1.2" height="2.1" fill="#dcdc50"/>
<rect x="505.3" y="452.0" width="2.2" height="1.3" fill="#e8e860"/>
<rect x="514.1" y="453.4" width="2.4" height="2.0" fill="#d0d048"/>
<rect x="522.1" y="446.3" width="2.0" height="2.1" fill="#f0f078"/>
<rect x="524.7" y="448.6" width="1.7" height="1.7" fill="#d0d048"/>
<rect x="524.7" y="454.2" width="1.7" height="1.4" fill="#e8e860"/>
<rect x="528.0" y="447.0" width="2.4" height="1.7" fill="#e8e860"/>
<rect x="532.5" y="446.2" width="2.2" height="2.0" fill="#d0d048"/>
<rect x="539.5" y="448.4" width="1.2" height="1.7" fill="#e8e860"/>
<rect x="541.6" y="448.1" width="2.6" height="1.6" fill="#e8e860"/>
<rect x="543.7" y="452.3" width="2.1" height="1.8" fill="#f0f078"/>
<rect x="547.3" y="447.3" width="2.5" height="1.8" fill="#f0f078"/>
<rect x="553.2" y="448.5" width="1.2" height="1.5" fill="#e8e860"/>
<rect x="557.3" y="448.2" width="2.4" height="1.6" fill="#f0f078"/>
<rect x="559.5" y="448.6" width="2.3" height="1.4" fill="#dcdc50"/>
<rect x="590.3" y="446.6" width="2.5" height="1.8" fill="#e8e860"/>
<rect x="604.3" y="448.1" width="1.7" height="1.6" fill="#dcdc50"/>
<rect x="610.4" y="448.4" width="2.1" height="1.7" fill="#e8e860"/>
<rect x="612.2" y="448.6" width="2.6" height="1.3" fill="#d0d048"/>
<rect x="189" y="410" width="1.5" height="1.5" fill="#c8c860"/>
<polyline points="3.6,35.0 4.0,25.5 5.5,25.0 7.6,26.5 10.4,25.3 22.0,25.3 24.0,24.3 29.7,24.3 31.1,25.8 33.5,24.3 40.1,24.3 42.9,18.3 47.0,25.8 49.0,24.3 94.5,24.2 96.8,25.8 99.0,24.2 136.0,24.2 138.0,22.5 140.5,24.2 145.5,24.2 147.3,25.8 149.5,24.2 246.0,24.2 248.4,26.0 250.6,24.2 292.0,24.2 294.0,25.8 298.0,25.8 300.0,24.2 346.5,24.2 348.6,25.2 350.7,24.2 364.5,24.2 366.7,20.2 369.0,24.2 373.0,24.2 375.0,25.0 377.0,24.2 396.8,24.2 398.8,25.5 400.8,24.2 447.7,24.2 449.7,25.5 451.7,24.2 499.5,24.2 502.0,26.6 504.5,24.2 553.5,24.2 555.6,22.7 557.7,24.2 567.0,24.2 569.0,25.6 571.0,24.2 598.4,24.2 600.4,25.2 602.4,24.2 608.5,24.2 610.6,22.8 612.7,24.2 626.0,24.2 629.0,23.2" fill="none" stroke="#12304a" stroke-width="6" transform="translate(0,3)" opacity="0.3"/>
<polyline points="3.6,35.0 4.0,25.5 5.5,25.0 7.6,26.5 10.4,25.3 22.0,25.3 24.0,24.3 29.7,24.3 31.1,25.8 33.5,24.3 40.1,24.3 42.9,18.3 47.0,25.8 49.0,24.3 94.5,24.2 96.8,25.8 99.0,24.2 136.0,24.2 138.0,22.5 140.5,24.2 145.5,24.2 147.3,25.8 149.5,24.2 246.0,24.2 248.4,26.0 250.6,24.2 292.0,24.2 294.0,25.8 298.0,25.8 300.0,24.2 346.5,24.2 348.6,25.2 350.7,24.2 364.5,24.2 366.7,20.2 369.0,24.2 373.0,24.2 375.0,25.0 377.0,24.2 396.8,24.2 398.8,25.5 400.8,24.2 447.7,24.2 449.7,25.5 451.7,24.2 499.5,24.2 502.0,26.6 504.5,24.2 553.5,24.2 555.6,22.7 557.7,24.2 567.0,24.2 569.0,25.6 571.0,24.2 598.4,24.2 600.4,25.2 602.4,24.2 608.5,24.2 610.6,22.8 612.7,24.2 626.0,24.2 629.0,23.2" fill="none" stroke="#9cc0dc" stroke-width="1.3"/>
</svg>
<div class="a" style="left:67.5px;top:238.7px;width:2.5px;height:1.2px;background:#b0b0b0"></div>
<div class="a" style="left:701.5px;top:238.7px;width:2.5px;height:1.2px;background:#b0b0b0"></div>
<div class="a" style="left:67.5px;top:303.8px;width:2.5px;height:1.2px;background:#b0b0b0"></div>
<div class="a" style="left:701.5px;top:303.8px;width:2.5px;height:1.2px;background:#b0b0b0"></div>
<div class="a" style="left:67.5px;top:368.8px;width:2.5px;height:1.2px;background:#b0b0b0"></div>
<div class="a" style="left:701.5px;top:368.8px;width:2.5px;height:1.2px;background:#b0b0b0"></div>
<div class="a" style="left:67.5px;top:433.8px;width:2.5px;height:1.2px;background:#b0b0b0"></div>
<div class="a" style="left:701.5px;top:433.8px;width:2.5px;height:1.2px;background:#b0b0b0"></div>
<div class="a" style="left:67.5px;top:498.9px;width:2.5px;height:1.2px;background:#b0b0b0"></div>
<div class="a" style="left:701.5px;top:498.9px;width:2.5px;height:1.2px;background:#b0b0b0"></div>
<div class="a" style="left:67.5px;top:563.9px;width:2.5px;height:1.2px;background:#b0b0b0"></div>
<div class="a" style="left:701.5px;top:563.9px;width:2.5px;height:1.2px;background:#b0b0b0"></div>
<div class="a" style="left:67.5px;top:629.0px;width:2.5px;height:1.2px;background:#b0b0b0"></div>
<div class="a" style="left:701.5px;top:629.0px;width:2.5px;height:1.2px;background:#b0b0b0"></div>
<div class="a" style="left:72.2px;top:697px;width:1.1px;height:3px;background:#a8a8a8"></div>
<div class="a" style="left:103.6px;top:697px;width:1.1px;height:3px;background:#a8a8a8"></div>
<div class="a" style="left:134.9px;top:697px;width:1.1px;height:3px;background:#a8a8a8"></div>
<div class="a" style="left:166.3px;top:697px;width:1.1px;height:3px;background:#a8a8a8"></div>
<div class="a" style="left:197.6px;top:697px;width:1.1px;height:3px;background:#a8a8a8"></div>
<div class="a" style="left:229.0px;top:697px;width:1.1px;height:3px;background:#a8a8a8"></div>
<div class="a" style="left:260.3px;top:697px;width:1.1px;height:3px;background:#a8a8a8"></div>
<div class="a" style="left:291.6px;top:697px;width:1.1px;height:3px;background:#a8a8a8"></div>
<div class="a" style="left:323.0px;top:697px;width:1.1px;height:3px;background:#a8a8a8"></div>
<div class="a" style="left:354.4px;top:697px;width:1.1px;height:3px;background:#a8a8a8"></div>
<div class="a" style="left:385.7px;top:697px;width:1.1px;height:3px;background:#a8a8a8"></div>
<div class="a" style="left:417.1px;top:697px;width:1.1px;height:3px;background:#a8a8a8"></div>
<div class="a" style="left:448.4px;top:697px;width:1.1px;height:3px;background:#a8a8a8"></div>
<div class="a" style="left:479.8px;top:697px;width:1.1px;height:3px;background:#a8a8a8"></div>
<div class="a" style="left:511.1px;top:697px;width:1.1px;height:3px;background:#a8a8a8"></div>
<div class="a" style="left:542.4px;top:697px;width:1.1px;height:3px;background:#a8a8a8"></div>
<div class="a" style="left:573.8px;top:697px;width:1.1px;height:3px;background:#a8a8a8"></div>
<div class="a" style="left:605.1px;top:697px;width:1.1px;height:3px;background:#a8a8a8"></div>
<div class="a" style="left:636.5px;top:697px;width:1.1px;height:3px;background:#a8a8a8"></div>
<div class="a" style="left:667.8px;top:697px;width:1.1px;height:3px;background:#a8a8a8"></div>
<div class="a" style="left:699.2px;top:697px;width:1.1px;height:3px;background:#a8a8a8"></div>
<div class="t" style="left:-133.5px;width:200px;text-align:right;top:230.8px;font-size:16.6px;font-weight:400;color:#1c1c1c;transform:scaleX(0.9);transform-origin:100% 50%">35</div>
<div class="t" style="left:705.5px;top:230.8px;font-size:16.6px;font-weight:400;color:#1c1c1c;transform:scaleX(0.9);transform-origin:0 50%">35</div>
<div class="t" style="left:-133.5px;width:200px;text-align:right;top:295.9px;font-size:16.6px;font-weight:400;color:#1c1c1c;transform:scaleX(0.9);transform-origin:100% 50%">30</div>
<div class="t" style="left:705.5px;top:295.9px;font-size:16.6px;font-weight:400;color:#1c1c1c;transform:scaleX(0.9);transform-origin:0 50%">30</div>
<div class="t" style="left:-133.5px;width:200px;text-align:right;top:360.9px;font-size:16.6px;font-weight:400;color:#1c1c1c;transform:scaleX(0.9);transform-origin:100% 50%">25</div>
<div class="t" style="left:705.5px;top:360.9px;font-size:16.6px;font-weight:400;color:#1c1c1c;transform:scaleX(0.9);transform-origin:0 50%">25</div>
<div class="t" style="left:-133.5px;width:200px;text-align:right;top:426.0px;font-size:16.6px;font-weight:400;color:#1c1c1c;transform:scaleX(0.9);transform-origin:100% 50%">20</div>
<div class="t" style="left:705.5px;top:426.0px;font-size:16.6px;font-weight:400;color:#1c1c1c;transform:scaleX(0.9);transform-origin:0 50%">20</div>
<div class="t" style="left:-133.5px;width:200px;text-align:right;top:491.0px;font-size:16.6px;font-weight:400;color:#1c1c1c;transform:scaleX(0.9);transform-origin:100% 50%">15</div>
<div class="t" style="left:705.5px;top:491.0px;font-size:16.6px;font-weight:400;color:#1c1c1c;transform:scaleX(0.9);transform-origin:0 50%">15</div>
<div class="t" style="left:-133.5px;width:200px;text-align:right;top:556.1px;font-size:16.6px;font-weight:400;color:#1c1c1c;transform:scaleX(0.9);transform-origin:100% 50%">10</div>
<div class="t" style="left:705.5px;top:556.1px;font-size:16.6px;font-weight:400;color:#1c1c1c;transform:scaleX(0.9);transform-origin:0 50%">10</div>
<div class="t" style="left:-133.5px;width:200px;text-align:right;top:621.1px;font-size:16.6px;font-weight:400;color:#1c1c1c;transform:scaleX(0.9);transform-origin:100% 50%">5</div>
<div class="t" style="left:705.5px;top:621.1px;font-size:16.6px;font-weight:400;color:#1c1c1c;transform:scaleX(0.9);transform-origin:0 50%">5</div>
<div class="t" style="left:71.79px;top:221.0px;font-size:16.1px;font-weight:400;color:#1c1c1c;transform:scaleX(1.0057);transform-origin:0 50%;">MB/s</div>
<div class="t" style="left:677.32px;top:220.7px;font-size:16.1px;font-weight:400;color:#1c1c1c;transform:scaleX(0.9800);transform-origin:0 50%;">ms</div>
<div class="t" style="left:-28.7px;width:200px;text-align:center;top:700.9px;font-size:16.6px;font-weight:400;color:#1c1c1c;transform:scaleX(0.9);transform-origin:50% 50%">0</div>
<div class="t" style="left:34.0px;width:200px;text-align:center;top:700.9px;font-size:16.6px;font-weight:400;color:#1c1c1c;transform:scaleX(0.9);transform-origin:50% 50%">3</div>
<div class="t" style="left:96.7px;width:200px;text-align:center;top:700.9px;font-size:16.6px;font-weight:400;color:#1c1c1c;transform:scaleX(0.9);transform-origin:50% 50%">6</div>
<div class="t" style="left:159.4px;width:200px;text-align:center;top:700.9px;font-size:16.6px;font-weight:400;color:#1c1c1c;transform:scaleX(0.9);transform-origin:50% 50%">9</div>
<div class="t" style="left:222.1px;width:200px;text-align:center;top:700.9px;font-size:16.6px;font-weight:400;color:#1c1c1c;transform:scaleX(0.9);transform-origin:50% 50%">12</div>
<div class="t" style="left:284.8px;width:200px;text-align:center;top:700.9px;font-size:16.6px;font-weight:400;color:#1c1c1c;transform:scaleX(0.9);transform-origin:50% 50%">15</div>
<div class="t" style="left:347.5px;width:200px;text-align:center;top:700.9px;font-size:16.6px;font-weight:400;color:#1c1c1c;transform:scaleX(0.9);transform-origin:50% 50%">18</div>
<div class="t" style="left:410.2px;width:200px;text-align:center;top:700.9px;font-size:16.6px;font-weight:400;color:#1c1c1c;transform:scaleX(0.9);transform-origin:50% 50%">21</div>
<div class="t" style="left:472.9px;width:200px;text-align:center;top:700.9px;font-size:16.6px;font-weight:400;color:#1c1c1c;transform:scaleX(0.9);transform-origin:50% 50%">24</div>
<div class="t" style="left:535.6px;width:200px;text-align:center;top:700.9px;font-size:16.6px;font-weight:400;color:#1c1c1c;transform:scaleX(0.9);transform-origin:50% 50%">27</div>
<div class="t" style="left:681.0px;top:700.4px;font-size:16.6px;font-weight:400;color:#1c1c1c;transform:scaleX(0.88);transform-origin:0 50%">31gB</div>
<div class="a" style="left:742px;top:257.5px;width:160px;height:2.0px;border-top:1px solid #a0a0a0;border-bottom:1px solid #fff"></div>
<div class="a" style="left:742px;top:314.5px;width:160px;height:2.0px;border-top:1px solid #a0a0a0;border-bottom:1px solid #fff"></div>
<div class="a" style="left:742px;top:418.5px;width:160px;height:2.0px;border-top:1px solid #a0a0a0;border-bottom:1px solid #fff"></div>
<div class="a" style="left:742px;top:570.5px;width:160px;height:2.0px;border-top:1px solid #a0a0a0;border-bottom:1px solid #fff"></div>
<div class="a" style="left:755px;top:211px;width:116px;height:31px;border:1.5px solid #3c7496;border-radius:3px;background:linear-gradient(180deg,#f2f5f6 0%,#e6ecef 45%,#d2dde3 55%,#c4d5df 100%);box-shadow:inset 0 0 0 1.2px #b4f2ff,inset 0 0 4px 2px #a4eafc"></div>
<div class="t" style="left:796.06px;top:218.7px;font-size:16.4px;font-weight:400;color:#1c1c1c;transform:scaleX(0.9412);transform-origin:0 50%;">Start</div>
<svg class="a" style="left:748px;top:266px" width="21" height="45" viewBox="0 0 21 45">
<defs><radialGradient id="rg1" cx="0.4" cy="0.35" r="0.7"><stop offset="0" stop-color="#8fdcfb"/><stop offset="0.5" stop-color="#2a87c2"/><stop offset="1" stop-color="#103a5e"/></radialGradient>
<linearGradient id="rg0" x1="0" y1="0" x2="1" y2="1"><stop offset="0" stop-color="#d8d8d8"/><stop offset="1" stop-color="#fafafa"/></linearGradient></defs>
<circle cx="10.3" cy="10.4" r="8.3" fill="#f4f4f4" stroke="#8b8b8b" stroke-width="1.2"/>
<circle cx="10.3" cy="10.4" r="6.3" fill="url(#rg0)"/>
<circle cx="10.3" cy="10.4" r="5" fill="url(#rg1)" stroke="#1a4a70" stroke-width="0.8"/>
<circle cx="10.3" cy="34" r="8.3" fill="#f4f4f4" stroke="#8b8b8b" stroke-width="1.2"/>
<circle cx="10.3" cy="34" r="6.3" fill="url(#rg0)"/>
</svg>
<div class="t" style="left:770.94px;top:268.4px;font-size:16.1px;font-weight:400;color:#1c1c1c;transform:scaleX(1.0595);transform-origin:0 50%;">Read</div>
<div class="t" style="left:772.00px;top:292.2px;font-size:16.1px;font-weight:400;color:#1c1c1c;transform:scaleX(0.9459);transform-origin:0 50%;">Write</div>
<div class="a" style="left:749px;top:327px;width:18px;height:18px;border:1px solid #8e8f8f;background:linear-gradient(135deg,#d6d6d6 0%,#f4f4f4 100%);box-shadow:inset 0 0 0 2px #f0f0f0"></div>
<div class="t" style="left:771.02px;top:328.4px;font-size:16.1px;font-weight:400;color:#1c1c1c;transform:scaleX(0.9753);transform-origin:0 50%;">Short stroke</div>
<div class="a" style="left:749px;top:355.5px;width:97px;height:27.0px;border:1px solid #c2c2c2;background:#fff"></div>
<div class="a" style="left:821px;top:357px;width:24px;height:24px;border:1px solid #d4d4d4;background:linear-gradient(180deg,#f2f2f2,#e4e4e4)"></div>
<div class="a" style="left:822px;top:368.5px;width:22px;height:1.0px;background:#d0d0d0"></div>
<svg class="a" style="left:821px;top:357px" width="24" height="24"><path d="M8 9 L12 5 L16 9 Z" fill="#a8a8a8"/><path d="M8 15 L12 19 L16 15 Z" fill="#a8a8a8"/></svg>
<div class="t" style="left:752.30px;top:360.4px;font-size:15.8px;font-weight:400;color:#8a8a8a;transform:scaleX(0.9824);transform-origin:0 50%;">40</div>
<div class="t" style="left:864.96px;top:361.8px;font-size:16.1px;font-weight:400;color:#1c1c1c;transform:scaleX(1.0389);transform-origin:0 50%;">gB</div>
<div class="a" style="left:749px;top:398px;width:18px;height:18px;border:1px solid #8e8f8f;background:linear-gradient(135deg,#d6d6d6 0%,#f4f4f4 100%);box-shadow:inset 0 0 0 2px #f0f0f0"></div>
<svg class="a" style="left:749px;top:398px" width="18" height="18" viewBox="0 0 18 18"><path d="M4.5 9.5 L7.8 13.8 L13.8 3.8" fill="none" stroke="#2a3e7a" stroke-width="2.2" stroke-linejoin="miter"/></svg>
<div class="t" style="left:773.20px;top:398.9px;font-size:16.1px;font-weight:400;color:#1c1c1c;transform:scaleX(0.9637);transform-origin:0 50%;">Transfer rate</div>
<div class="t" style="left:748.83px;top:425.1px;font-size:16.1px;font-weight:400;color:#1c1c1c;transform:scaleX(0.9698);transform-origin:0 50%;">Minimum</div>
<div class="a" style="left:750px;top:446.4px;width:145px;height:20.600000000000023px;background:#000"></div>
<div class="t" style="left:722.3px;width:200px;text-align:center;top:448.6px;font-size:16.8px;font-weight:700;color:#3ea3e6;letter-spacing:0.25px;-webkit-text-stroke:0.1px currentColor">32.3 MB/s</div>
<div class="t" style="left:748.21px;top:472.9px;font-size:16.1px;font-weight:400;color:#1c1c1c;transform:scaleX(0.9853);transform-origin:0 50%;">Maximum</div>
<div class="a" style="left:750px;top:494px;width:145px;height:21px;background:#000"></div>
<div class="t" style="left:722.3px;width:200px;text-align:center;top:495.9px;font-size:16.8px;font-weight:700;color:#3ea3e6;letter-spacing:0.25px;-webkit-text-stroke:0.1px currentColor">33.8 MB/s</div>
<div class="t" style="left:748.80px;top:517.8px;font-size:16.1px;font-weight:400;color:#1c1c1c;transform:scaleX(1.0254);transform-origin:0 50%;">Average</div>
<div class="a" style="left:750px;top:538.2px;width:145px;height:21.399999999999977px;background:#000"></div>
<div class="t" style="left:722.3px;width:200px;text-align:center;top:540.8px;font-size:16.8px;font-weight:700;color:#3ea3e6;letter-spacing:0.25px;-webkit-text-stroke:0.1px currentColor">33.3 MB/s</div>
<div class="a" style="left:749px;top:581px;width:18px;height:18px;border:1px solid #8e8f8f;background:linear-gradient(135deg,#d6d6d6 0%,#f4f4f4 100%);box-shadow:inset 0 0 0 2px #f0f0f0"></div>
<svg class="a" style="left:749px;top:581px" width="18" height="18" viewBox="0 0 18 18"><path d="M4.5 9.5 L7.8 13.8 L13.8 3.8" fill="none" stroke="#2a3e7a" stroke-width="2.2" stroke-linejoin="miter"/></svg>
<div class="t" style="left:772.00px;top:581.9px;font-size:16.1px;font-weight:400;color:#1c1c1c;transform:scaleX(0.9860);transform-origin:0 50%;">Access time</div>
<div class="a" style="left:750px;top:602.5px;width:145px;height:21.700000000000045px;background:#000"></div>
<div class="t" style="left:722.3px;width:200px;text-align:center;top:605.0px;font-size:16.8px;font-weight:700;color:#ecec66;letter-spacing:0.25px;-webkit-text-stroke:0.1px currentColor">0.7 ms</div>
<div class="a" style="left:749px;top:631px;width:18px;height:18px;border:1px solid #8e8f8f;background:linear-gradient(135deg,#d6d6d6 0%,#f4f4f4 100%);box-shadow:inset 0 0 0 2px #f0f0f0"></div>
<svg class="a" style="left:749px;top:631px" width="18" height="18" viewBox="0 0 18 18"><path d="M4.5 9.5 L7.8 13.8 L13.8 3.8" fill="none" stroke="#2a3e7a" stroke-width="2.2" stroke-linejoin="miter"/></svg>
<div class="t" style="left:771.04px;top:631.7px;font-size:16.1px;font-weight:400;color:#1c1c1c;transform:scaleX(0.9603);transform-origin:0 50%;">Burst rate</div>
<div class="a" style="left:750px;top:652.5px;width:145px;height:21.5px;background:#000"></div>
<div class="t" style="left:722.3px;width:200px;text-align:center;top:655.0px;font-size:16.8px;font-weight:700;color:#ffffff;letter-spacing:0.25px;-webkit-text-stroke:0.1px currentColor">25.4 MB/s</div>
<div class="t" style="left:748.21px;top:679.7px;font-size:16.1px;font-weight:400;color:#1c1c1c;transform:scaleX(0.9926);transform-origin:0 50%;">CPU usage</div>
<div class="a" style="left:750px;top:700px;width:145px;height:21px;background:#000"></div>
<div class="t" style="left:722.3px;width:200px;text-align:center;top:702.4px;font-size:16.8px;font-weight:700;color:#ffffff;letter-spacing:0.25px;-webkit-text-stroke:0.1px currentColor">7.2%</div>
<svg class="a" style="left:13px;top:14px" width="24" height="23" viewBox="0 0 24 23"><path d="M2 12.8 Q1.2 13.6 2 14.4 L10.2 21.3 Q11 22 11.8 21.3 L22.2 9 Q22.9 8.2 22.1 7.4 L14 2.6 Q13.2 2 12.4 2.6 Z" fill="#28323c"/><circle cx="13.4" cy="9.3" r="6.1" fill="#f0dcb6"/><circle cx="13.6" cy="9.2" r="2.8" fill="#ddb888" opacity=".55"/><ellipse cx="10.8" cy="15.6" rx="3.2" ry="2.3" fill="#d0d0d0" opacity=".6"/></svg>
<svg class="a" style="left:565px;top:95px" width="20" height="19" viewBox="0 0 20 19"><path d="M1 1 H6.5 L8.5 3 V14.5 H1 Z" fill="#e4f2fb" stroke="#111" stroke-width="1.3"/><path d="M2.5 5 H6 M2.5 7.5 H6 M2.5 10 H6" stroke="#3a82c8" stroke-width="1.2"/><path d="M8 2.5 H15 L18.5 6 V17.7 H8 Z" fill="#e4f2fb" stroke="#111" stroke-width="1.3"/><path d="M10 7.5 H16 M10 10 H16 M10 12.5 H16 M10 15 H14" stroke="#3a82c8" stroke-width="1.2"/></svg>
<svg class="a" style="left:612px;top:95px" width="20" height="19" viewBox="0 0 20 19"><path d="M1 1 H6.5 L8.5 3 V14.5 H1 Z" fill="#f0faf0" stroke="#111" stroke-width="1.3"/><path d="M2.3 5 H5.5 V12 H2.3 Z" fill="#3aa53a" opacity=".85"/><path d="M8 2.5 H15 L18.5 6 V17.7 H8 Z" fill="#f0faf0" stroke="#111" stroke-width="1.3"/><path d="M9.8 7.5 Q12 6.5 13 9 Q15 8 16.8 10 V15.8 H9.8 Z" fill="#2e9a2e"/></svg>
<svg class="a" style="left:660px;top:94px" width="20" height="19" viewBox="0 0 20 19"><path d="M1 1.5 H17.5 L19 3 V18 H2.5 L1 16.5 Z" fill="#2b2f86" stroke="#15184a" stroke-width="1"/><rect x="5" y="2" width="9" height="7.5" fill="#c8ccc8"/><rect x="5" y="13.5" width="9.5" height="4.5" fill="#e8e8ee"/><rect x="9.5" y="14" width="2" height="3.5" fill="#2b2f86"/></svg>
<svg class="a" style="left:705px;top:94px" width="22" height="20" viewBox="0 0 22 20"><g transform="rotate(38 11 10)"><rect x="0.8" y="5" width="11.5" height="9.5" rx="4" fill="#d8d448" stroke="#1a1a00" stroke-width="1.7"/><rect x="9.8" y="5.5" width="11.5" height="9.5" rx="4" fill="#d8d448" stroke="#1a1a00" stroke-width="1.7"/></g><path d="M6 6.5 V10 M8.5 5.5 V10 M12.5 10.5 V14.5 M15.5 10 V15" stroke="#5a5810" stroke-width="1.1"/></svg>
<svg class="a" style="left:758px;top:91px" width="26" height="25" viewBox="0 0 26 25"><defs><linearGradient id="pg" x1="0" y1="0" x2="1" y2="1"><stop offset="0" stop-color="#d040d8"/><stop offset=".5" stop-color="#b010b8"/><stop offset="1" stop-color="#6a0070"/></linearGradient></defs><rect x="0.5" y="0.5" width="25" height="24" rx="3" fill="#f4c8f4" opacity=".8"/><rect x="1.8" y="1.6" width="22.3" height="22" rx="2.5" fill="url(#pg)"/><path d="M11.5 4 H14.5 V14 H19.5 L13 21.5 L6.5 14 H11.5 Z" fill="#fff"/></svg>
<svg class="a" style="left:62px;top:148px" width="19" height="20" viewBox="0 0 19 20"><path d="M1.5 1 H13 L17.3 5.3 V18.5 H1.5 Z" fill="#f4f0f6" stroke="#111" stroke-width="1.6"/><path d="M13 1 V5.3 H17.3" fill="none" stroke="#111" stroke-width="1"/><ellipse cx="8.5" cy="7.5" rx="3.6" ry="4.6" fill="#8a1e9a"/><rect x="7" y="12" width="3.2" height="2.5" fill="#5a1a6a"/><rect x="7.5" y="15.5" width="2.2" height="2.5" fill="#222"/></svg>
<svg class="a" style="left:264px;top:148px" width="20" height="20" viewBox="0 0 20 20"><defs><linearGradient id="dm" x1="0" y1="0" x2="0" y2="1"><stop offset="0" stop-color="#fbfbe0"/><stop offset="1" stop-color="#b8ecb8"/></linearGradient></defs><rect x="1.2" y="1.2" width="17.6" height="17.6" rx="2.5" fill="url(#dm)" stroke="#111" stroke-width="1.8"/><path d="M2.5 18 V11 H4.5 V14 H6.5 V12.5 H9 V8.5 H11 V10 H12.5 V13 H15 V12 H17.5 V18 Z" fill="#1ea83c"/></svg>
<svg class="a" style="left:442px;top:148px" width="20" height="19" viewBox="0 0 20 19"><path d="M2.5 7 Q0.8 9.3 2.5 11.8 L11 18 V0.8 Z" fill="#e8e24a" stroke="#111" stroke-width="1.6" stroke-linejoin="round"/><path d="M3.5 8.5 L9.5 4.5 V14.5 Z" fill="#f4f08a" opacity=".5"/><path d="M12.8 6 Q14.6 9.4 12.8 12.8 M15.3 4.2 Q18.6 9.4 15.3 14.6" fill="none" stroke="#2a2a2a" stroke-width="1.6"/></svg>
<svg class="a" style="left:567px;top:148px" width="20" height="20" viewBox="0 0 20 20"><rect x="1.2" y="1.2" width="17.6" height="17.6" rx="2.5" fill="#fbfbe4" stroke="#111" stroke-width="1.8"/><g fill="#6a6a3a"><rect x="5" y="8" width="1.5" height="1.5"/><rect x="8.5" y="8" width="1.5" height="1.5"/><rect x="12" y="5" width="1.5" height="1.5"/><rect x="14" y="5" width="1.5" height="1.5"/><rect x="14" y="8" width="1.5" height="1.5"/><rect x="4" y="11" width="1.5" height="1.5"/><rect x="7" y="12" width="1.5" height="1.5"/><rect x="10" y="11" width="1.5" height="1.5"/><rect x="12" y="13" width="1.5" height="1.5"/><rect x="15" y="13" width="1.5" height="1.5"/><rect x="5" y="14.5" width="1.5" height="1.5"/><rect x="9" y="14.5" width="1.5" height="1.5"/></g></svg>
<svg class="a" style="left:776px;top:148px" width="20" height="20" viewBox="0 0 20 20"><defs><linearGradient id="et" x1="0" y1="0" x2="0" y2="1"><stop offset="0" stop-color="#fbfbe0"/><stop offset="1" stop-color="#a8e0b8"/></linearGradient></defs><rect x="1.2" y="1.2" width="17.6" height="17.6" rx="1.5" fill="url(#et)" stroke="#111" stroke-width="1.8"/><path d="M2 18 V12 H5 V11 H7.5 V18 Z" fill="#1a8a4a"/><rect x="7.5" y="7.5" width="11" height="11" fill="#f0ecf0" stroke="#111" stroke-width="1.8"/><g fill="#333"><rect x="9.5" y="11" width="1.4" height="1.2"/><rect x="12" y="11" width="1.4" height="1.2"/><rect x="14.5" y="11" width="1.4" height="1.2"/><rect x="9.5" y="13.5" width="1.4" height="1.2"/><rect x="12" y="13.5" width="1.4" height="1.2"/><rect x="14.5" y="13.5" width="1.4" height="1.2"/><rect x="9.5" y="16" width="1.4" height="1.2"/><rect x="12" y="16" width="1.4" height="1.2"/><rect x="14.5" y="16" width="1.4" height="1.2"/></g></svg>
<svg class="a" style="left:64px;top:169px" width="11" height="21" viewBox="0 0 11 21"><path d="M5.5 1 C9 1 10.3 3.5 10.3 6 C10.3 9 8 10.5 7.8 13.5 H3.2 C3 10.5 0.7 9 0.7 6 C0.7 3.5 2 1 5.5 1 Z" fill="#dede40" stroke="#2a2a00" stroke-width="1.3"/><path d="M4 4 Q5.5 3 7 4.5" stroke="#f8f8a0" stroke-width="1.2" fill="none"/><rect x="3.3" y="13.5" width="4.4" height="2" fill="#3a3a10"/><ellipse cx="5.5" cy="18" rx="3" ry="1.8" fill="none" stroke="#222" stroke-width="1.5"/></svg>
<svg class="a" style="left:229px;top:171px" width="13" height="21" viewBox="0 0 13 21"><circle cx="7" cy="3.3" r="2.8" fill="#3a6ad8" stroke="#101a50" stroke-width="1.2"/><path d="M2.5 7.5 H9 V17.5 H11 V20 H2 V17.5 H4.3 V10 H2.5 Z" fill="#2450d0" stroke="#101a50" stroke-width="1.2" stroke-linejoin="round"/></svg>
<svg class="a" style="left:336px;top:172px" width="21" height="20" viewBox="0 0 21 20"><path d="M7 1 H13.5 V6.5 H19.5 V13 H13.5 V18.8 H7 V13 H1 V6.5 H7 Z" fill="#e02828" stroke="#3a0a0a" stroke-width="1.5" stroke-linejoin="round"/><path d="M8.5 3 V8 H3" stroke="#ff8080" stroke-width="1" fill="none"/></svg>
<svg class="a" style="left:466px;top:171px" width="22" height="22" viewBox="0 0 22 22"><path d="M13 13 L19.5 19.5" stroke="#0a0a60" stroke-width="4.2" stroke-linecap="round"/><circle cx="8.3" cy="7" r="5.9" fill="#4ed84e" stroke="#0a3a0a" stroke-width="1.6"/><circle cx="7" cy="5.8" r="2.5" fill="#90f090" opacity=".6"/></svg>
<svg class="a" style="left:626px;top:171px" width="20" height="21" viewBox="0 0 20 21"><path d="M1.2 4 Q1.2 2 3 2 H6.5 L8.5 4 H15.5 Q17 4 17 5.5 V7" fill="#e8e8b8" stroke="#111" stroke-width="1.5"/><path d="M1.2 4 V17.5 Q1.2 19.3 3 19.3" fill="none" stroke="#111" stroke-width="1.5"/><rect x="3.5" y="7" width="15" height="12.5" rx="1" fill="#e8c428" stroke="#111" stroke-width="1.6"/><rect x="5" y="8.5" width="12" height="3" fill="#f0da60" opacity=".8"/></svg>
<svg class="a" style="left:808px;top:171px" width="20" height="21" viewBox="0 0 20 21"><path d="M1.5 3.5 H7 Q9.5 0.8 12 3.5 H18 V6 H1.5 Z" fill="#ddd" stroke="#111" stroke-width="1.5" stroke-linejoin="round"/><path d="M3 6 H16.5 L15.8 19.5 H3.7 Z" fill="#7a7a7a" stroke="#111" stroke-width="1.6" stroke-linejoin="round"/><rect x="5.5" y="7" width="2.2" height="11.5" fill="#e8e8e8"/><rect x="9" y="7" width="1.5" height="11.5" fill="#b0b0b0"/><rect x="12" y="7" width="1.6" height="11.5" fill="#333"/></svg>
</body></html>
